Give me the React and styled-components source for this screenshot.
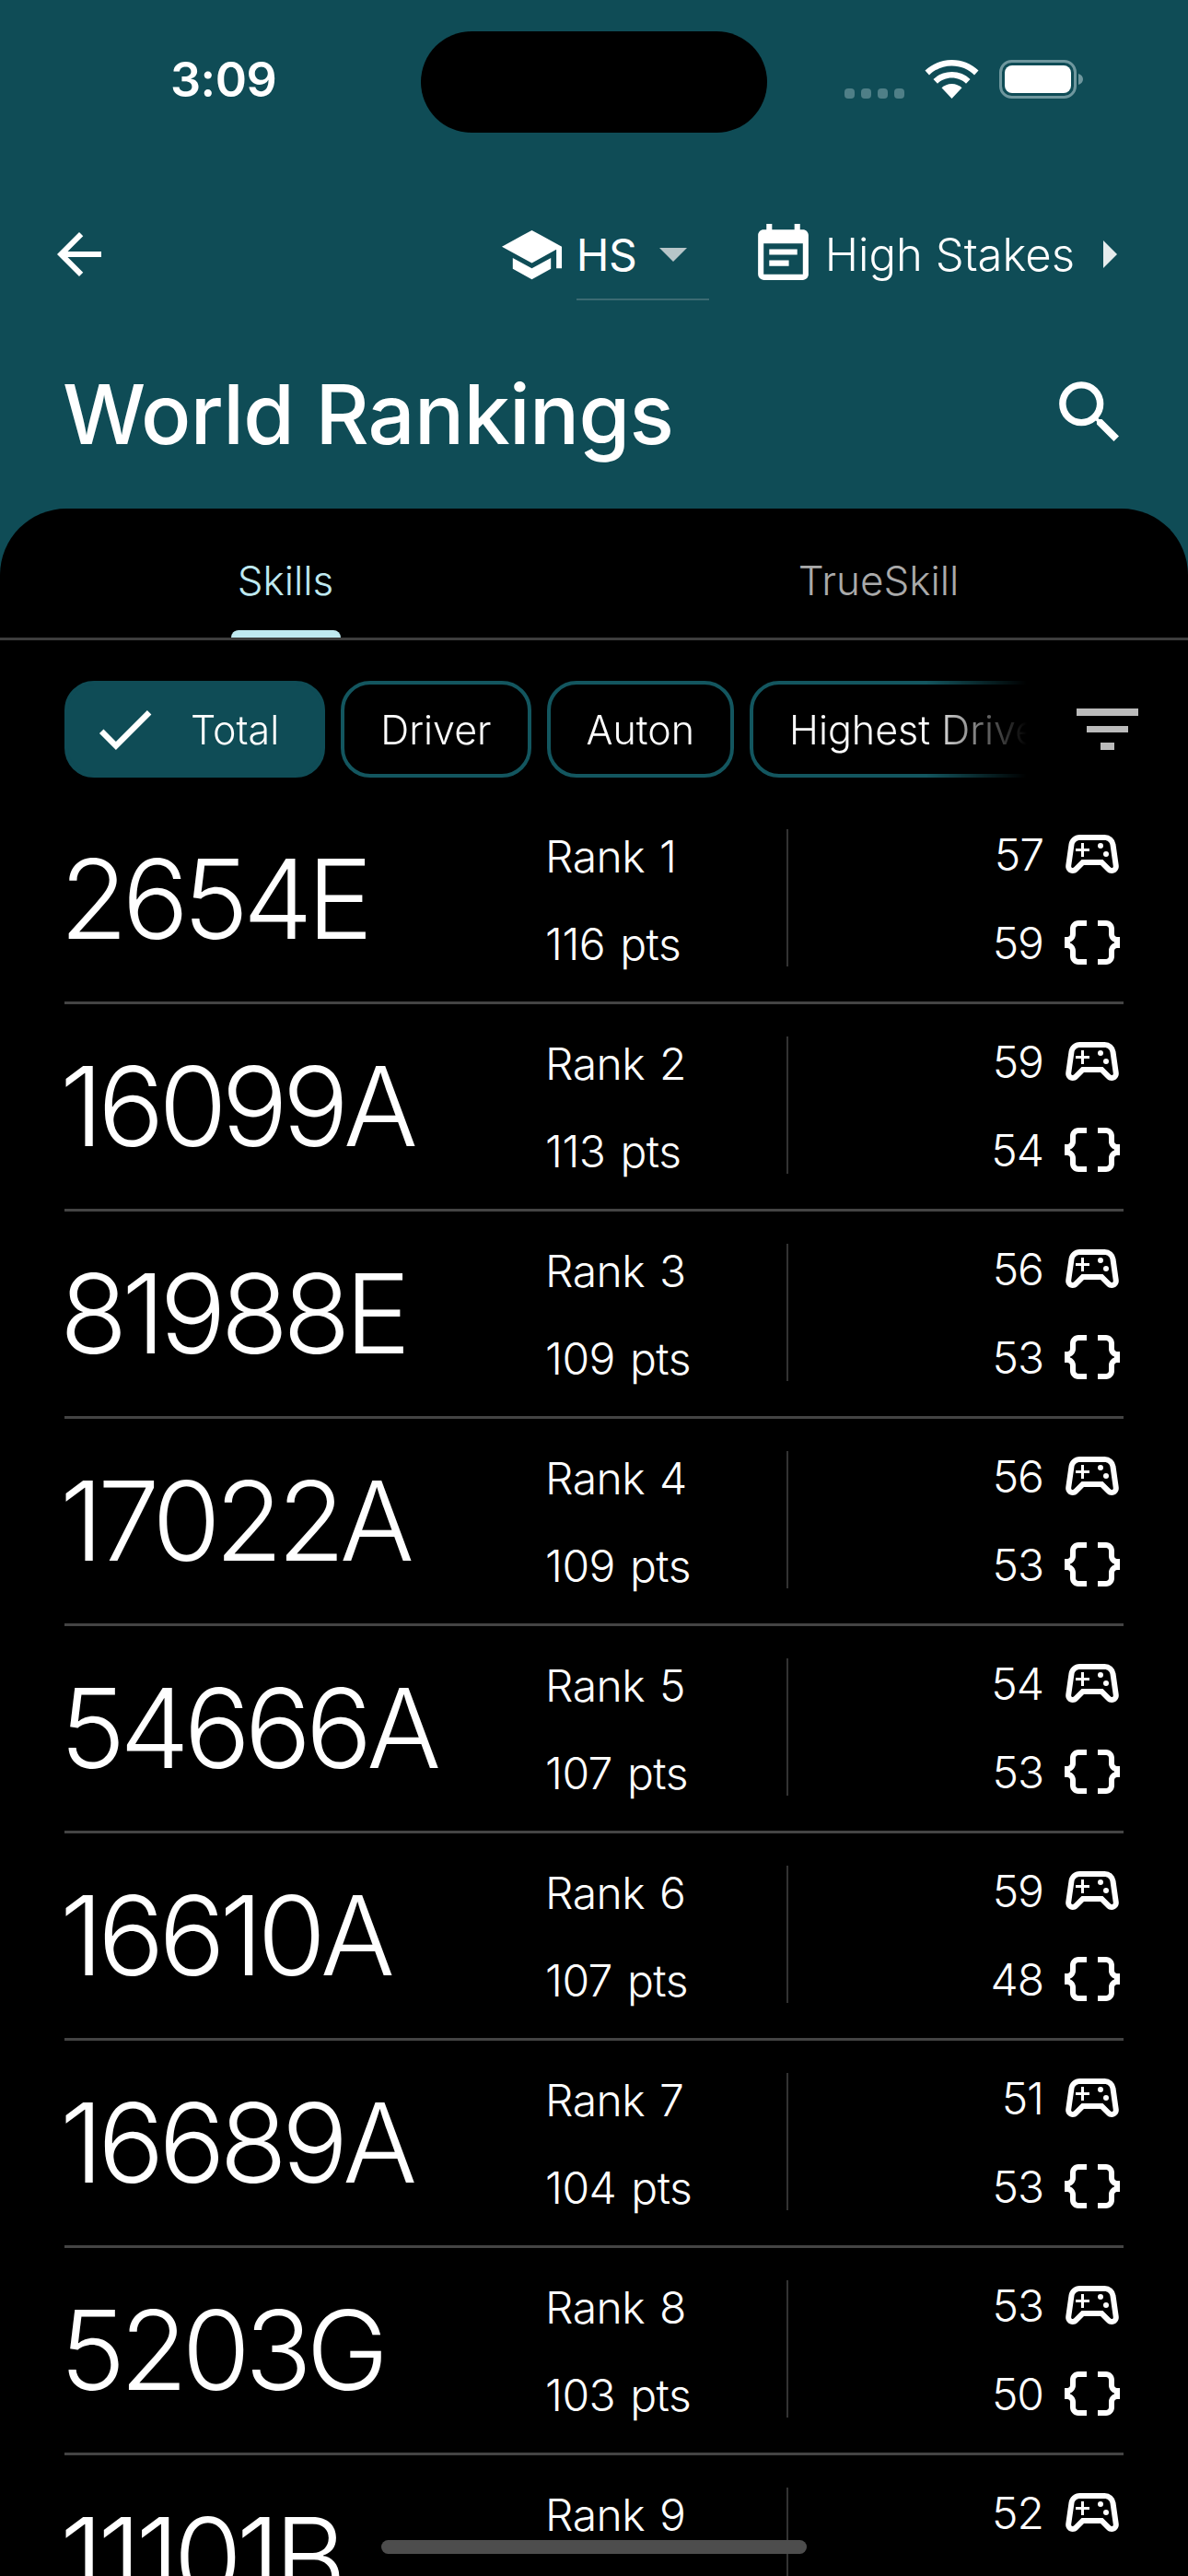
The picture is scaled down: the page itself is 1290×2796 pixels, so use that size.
import React from "react";
import styled, { createGlobalStyle } from "styled-components";
import {
  MdArrowBack,
  MdCheck,
  MdDataObject,
  MdEventNote,
  MdOutlineSportsEsports,
  MdSchool,
  MdSearch,
} from "react-icons/md";

const TEAL = "#0f4c56";
const CHIP_BORDER = "#13565f";

const GlobalStyle = createGlobalStyle`
  html, body {
    margin: 0;
    padding: 0;
    background: #000;
  }
  * {
    box-sizing: border-box;
  }
`;

const Page = styled.div`
  position: relative;
  width: 1290px;
  height: 2796px;
  overflow: hidden;
  background: ${TEAL};
  color: #fff;
  font-family: Inter, "Noto Sans", sans-serif;
`;

const Header = styled.header`
  height: 552px;
`;

const StatusBar = styled.div`
  position: relative;
  display: flex;
  justify-content: space-between;
  align-items: flex-start;
  height: 226px;
  padding: 60px 113px 0 185px;
`;

const Time = styled.span`
  font-size: 52px;
  line-height: 54px;
  font-weight: 600;
  letter-spacing: -0.5px;
`;

const Island = styled.div`
  position: absolute;
  left: 457px;
  top: 34px;
  width: 376px;
  height: 110px;
  border-radius: 55px;
  background: #000;
`;

const StatusIcons = styled.div`
  display: flex;
  align-items: flex-end;
  gap: 22px;
  height: 42px;
  margin-top: 5px;
`;

const NavRow = styled.nav`
  display: flex;
  align-items: center;
  height: 100px;
  padding: 0 77px 0 50px;
`;

const BackIcon = styled(MdArrowBack)`
  font-size: 72px;
  margin-right: auto;
`;

const SchoolIcon = styled(MdSchool)`
  font-size: 71px;
`;

const Picker = styled.div`
  position: relative;
  display: flex;
  align-items: center;
  width: 144px;
  margin: 0 44px 0 13px;
  font-size: 48px;
  letter-spacing: -0.5px;
  font-weight: 400;

  &::after {
    content: "";
    position: absolute;
    left: 0;
    right: 0;
    bottom: -20px;
    height: 2px;
    background: #3b6a72;
  }
`;

const CaretDown = styled.span`
  width: 0;
  height: 0;
  margin-left: 25px;
  border-left: 15px solid transparent;
  border-right: 15px solid transparent;
  border-top: 15px solid #b7c6c9;
`;

const CalendarIcon = styled(MdEventNote)`
  font-size: 73px;
`;

const SeasonLabel = styled.span`
  margin-left: 9px;
  font-size: 49px;
  font-weight: 300;
  letter-spacing: 0;
`;

const CaretRight = styled.span`
  width: 0;
  height: 0;
  margin-left: 31px;
  border-top: 15px solid transparent;
  border-bottom: 15px solid transparent;
  border-left: 15px solid #e6eced;
`;

const TitleRow = styled.div`
  display: flex;
  justify-content: space-between;
  align-items: center;
  height: 100px;
  margin-top: 74px;
  padding: 0 62px 0 68px;
`;

const Title = styled.h1`
  margin: 0;
  font-size: 90px;
  line-height: 100px;
  font-weight: 500;
  letter-spacing: -0.7px;
`;

const SearchIcon = styled(MdSearch)`
  font-size: 89px;
  margin-top: -6px;
`;

const Sheet = styled.main`
  height: 2244px;
  background: #000;
  border-radius: 72px 72px 0 0;
  overflow: hidden;
`;

const TabBar = styled.div`
  display: grid;
  grid-template-columns: 644px 644px;
  margin-left: -12px;
  width: 1302px;
  height: 143px;
  border-bottom: 3px solid #3d3d3d;
`;

const Tab = styled.div`
  display: flex;
  flex-direction: column;
  align-items: center;
  height: 140px;
  padding-top: 53px;
  font-size: 44px;
  line-height: 50px;
  font-weight: 300;
  color: ${(p) => (p.$active ? "#bfe9f0" : "#aaaaaa")};
`;

const TabIndicator = styled.span`
  width: 119px;
  height: 8px;
  margin-top: auto;
  border-radius: 8px 8px 0 0;
  background: #bfe9f0;
`;

const FilterRow = styled.div`
  display: flex;
  align-items: center;
  gap: 54px;
  height: 105px;
  margin-top: 44px;
  padding-left: 70px;
`;

const ChipScroller = styled.div`
  display: flex;
  gap: 17px;
  width: 1045px;
  overflow: hidden;
  mask-image: linear-gradient(to right, #000 calc(100% - 110px), transparent);
`;

const Chip = styled.div`
  flex: none;
  display: flex;
  align-items: center;
  height: 105px;
  padding: ${(p) => (p.$active ? "0 46px 0 27px" : "0 39px")};
  border: 4px solid ${(p) => (p.$active ? TEAL : CHIP_BORDER)};
  border-radius: 32px;
  background: ${(p) => (p.$active ? TEAL : "transparent")};
  font-size: 43px;
  font-weight: 300;
  white-space: nowrap;
`;

const ChipCheck = styled(MdCheck)`
  font-size: 77px;
  margin-right: 33px;
  margin-left: -4px;
`;

const FilterIcon = styled.svg`
  flex: none;
  width: 67px;
  height: 45px;
  fill: #bbbbbb;
`;

const List = styled.div`
  margin-top: 21px;
`;

const Row = styled.div`
  display: flex;
  align-items: flex-start;
  height: 225px;
  margin: 0 70px;
  border-bottom: 3px solid #444444;
`;

const TeamNumber = styled.div`
  width: 522px;
  height: 222px;
  margin-left: -5px;
  margin-right: 7px;
  font-size: 120px;
  line-height: 222px;
  font-weight: 300;
  letter-spacing: -6px;
`;

const Info = styled.div`
  display: grid;
  grid-template-rows: 60px 60px;
  row-gap: 35px;
  width: 260px;
  margin-top: 35px;
  margin-left: -2px;
  margin-right: 2px;
  font-size: 48px;
  line-height: 60px;
  font-weight: 300;
  letter-spacing: -0.5px;
  word-spacing: 3px;
`;

const Stats = styled.div`
  flex: 1;
  height: 149px;
  margin-top: 35px;
  border-left: 2px solid #333333;
`;

const Stat = styled.div`
  display: flex;
  justify-content: flex-end;
  align-items: center;
  gap: 17px;
  height: 72px;
  margin-top: ${(p) => (p.$first ? "-9px" : "24px")};
  font-size: 48px;
  font-weight: 300;
  letter-spacing: -1px;
  svg {
    font-size: 72px;
    margin-right: -2px;
  }
`;

const HomeIndicator = styled.div`
  position: absolute;
  left: 414px;
  top: 2757px;
  width: 462px;
  height: 15px;
  border-radius: 8px;
  background: #4d4d4d;
`;

const teams = [
  { id: "2654E", rank: 1, pts: 116, driver: 57, auton: 59 },
  { id: "16099A", rank: 2, pts: 113, driver: 59, auton: 54 },
  { id: "81988E", rank: 3, pts: 109, driver: 56, auton: 53 },
  { id: "17022A", rank: 4, pts: 109, driver: 56, auton: 53 },
  { id: "54666A", rank: 5, pts: 107, driver: 54, auton: 53 },
  { id: "16610A", rank: 6, pts: 107, driver: 59, auton: 48 },
  { id: "16689A", rank: 7, pts: 104, driver: 51, auton: 53 },
  { id: "5203G", rank: 8, pts: 103, driver: 53, auton: 50 },
  { id: "11101B", rank: 9, pts: 102, driver: 52, auton: 50 },
];

const SignalDots = () => (
  <svg width="65" height="11" viewBox="0 0 65 11" fill="#4f7f87">
    <rect x="0" width="11" height="11" rx="4" />
    <rect x="18" width="11" height="11" rx="4" />
    <rect x="36" width="11" height="11" rx="4" />
    <rect x="54" width="11" height="11" rx="4" />
  </svg>
);

const Wifi = () => (
  <svg width="59" height="42" viewBox="0 0 59 42" fill="#fff">
    <path d="M29.5 0C18 0 8 4.400 0.500 11.600L5 16.400C11.300 10.300 20 6.600 29.500 6.600S47.700 10.300 54 16.400L58.500 11.600C51 4.400 41 0 29.500 0Z" />
    <path d="M29.500 13C21.700 13 14.700 16 9.500 20.900L14 25.700C18 21.900 23.500 19.600 29.500 19.600S41 21.900 45 25.700L49.500 20.900C44.300 16 37.300 13 29.500 13Z" />
    <path d="M29.500 26C25.200 26 21.400 27.700 18.500 30.300L29.500 42L40.500 30.300C37.600 27.700 33.800 26 29.500 26Z" />
  </svg>
);

const Battery = () => (
  <svg width="92" height="42" viewBox="0 0 92 42">
    <rect x="1.500" y="1.500" width="81" height="39" rx="12" fill="none" stroke="#6f979e" strokeWidth="3" />
    <rect x="6" y="6" width="72" height="30" rx="8" fill="#fff" />
    <path d="M86 15c3 1 5 3 5 6s-2 5-5 6z" fill="#6f979e" />
  </svg>
);

const App = () => {
  return (
    <Page>
      <GlobalStyle />
      <Header>
        <StatusBar>
          <Time>3:09</Time>
          <Island />
          <StatusIcons>
            <SignalDots />
            <Wifi />
            <Battery />
          </StatusIcons>
        </StatusBar>
        <NavRow>
          <BackIcon />
          <SchoolIcon />
          <Picker>
            HS
            <CaretDown />
          </Picker>
          <CalendarIcon />
          <SeasonLabel>High Stakes</SeasonLabel>
          <CaretRight />
        </NavRow>
        <TitleRow>
          <Title>World Rankings</Title>
          <SearchIcon />
        </TitleRow>
      </Header>
      <Sheet>
        <TabBar>
          <Tab $active>
            Skills
            <TabIndicator />
          </Tab>
          <Tab>TrueSkill</Tab>
        </TabBar>
        <FilterRow>
          <ChipScroller>
            <Chip $active>
              <ChipCheck />
              Total
            </Chip>
            <Chip>Driver</Chip>
            <Chip>Auton</Chip>
            <Chip>Highest Driver</Chip>
          </ChipScroller>
          <FilterIcon viewBox="0 0 67 45">
            <rect width="67" height="8" />
            <rect x="11" y="19" width="45" height="7" />
            <rect x="26" y="37" width="15" height="8" />
          </FilterIcon>
        </FilterRow>
        <List>
          {teams.map((team) => (
            <Row key={team.id}>
              <TeamNumber>{team.id}</TeamNumber>
              <Info>
                <span>Rank {team.rank}</span>
                <span>{team.pts} pts</span>
              </Info>
              <Stats>
                <Stat $first>
                  {team.driver}
                  <MdOutlineSportsEsports />
                </Stat>
                <Stat>
                  {team.auton}
                  <MdDataObject />
                </Stat>
              </Stats>
            </Row>
          ))}
        </List>
      </Sheet>
      <HomeIndicator />
    </Page>
  );
};

export default App;
